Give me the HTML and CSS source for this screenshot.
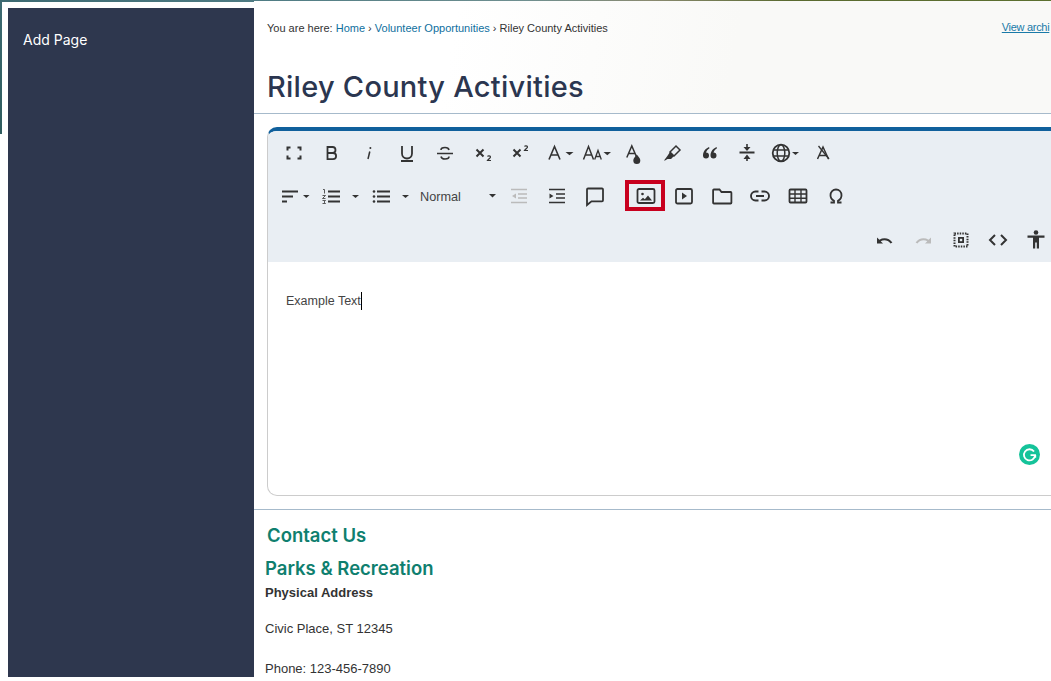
FILE: index.html
```html
<!DOCTYPE html>
<html lang="en">
<head>
<meta charset="utf-8">
<title>Riley County Activities</title>
<link rel="stylesheet" href="styles.css">
</head>
<body>
<div class="strip-top"></div>
<div class="strip-left"></div>
<div class="shell">
  <aside class="sidebar"><a class="side-link">Add Page</a></aside>
  <main class="main">
    <header class="head">
      <div class="crumb-row">
        <p class="crumbs">You are here: <a class="link">Home</a> › <a class="link">Volunteer Opportunities</a> › Riley County Activities</p>
        <a class="archive">View archi</a>
      </div>
      <h1 class="title">Riley County Activities</h1>
    </header>
    <section class="editor">
      <div class="toolbar">
        <div class="row">
          <button class="btn"><svg class="ic" viewBox="0 0 24 24"><path d="M5.500 9.500v-3h3M15.500 6.500h3v3M5.500 14.500v3h3M15.500 17.500h3v-3" stroke-width="2"/></svg></button>
          <button class="btn"><svg class="ic" viewBox="0 0 24 24"><path d="M7.500 6h5a3 3 0 0 1 0 6h-5zM7.500 12h5.500a3.100 3.100 0 0 1 0 6.200h-5.500z"/></svg></button>
          <button class="btn"><svg class="ic" viewBox="0 0 24 24"><path d="M12.800 10.500l-1.800 7.500" stroke-width="1.500"/><circle class="solid" cx="13.400" cy="7" r="1"/></svg></button>
          <button class="btn"><svg class="ic" viewBox="0 0 24 24"><path d="M7 5v7.500a5 5 0 0 0 10 0V5"/><path d="M6 20h12" stroke-width="2"/></svg></button>
          <button class="btn"><svg class="ic" viewBox="0 0 24 24"><path d="M16 9c-.3-1.600-2-2.500-4-2.500S8 7.500 8 9M4 12.500h16M8 15.500c.3 1.500 2 2.500 4 2.500s4-1 4-2.500" stroke-width="1.600"/></svg></button>
          <button class="btn"><svg class="ic" viewBox="0 0 24 24"><path d="M5.500 8.500l7 7M12.500 8.500l-7 7" stroke-width="2"/><path d="M16.500 15.500c.5-1 3-1 3 .5 0 1-2 2-3 3.500h3.500" stroke-width="1.200"/></svg></button>
          <button class="btn"><svg class="ic" viewBox="0 0 24 24"><path d="M4.500 8.500l7 7M11.500 8.500l-7 7" stroke-width="2"/><path d="M15.500 5.500c.5-1 3-1 3 .5 0 1-2 2-3 3.500h3.500" stroke-width="1.200"/></svg></button>
          <button class="btn"><svg class="ic" viewBox="0 0 24 24"><path d="M3 18.500L8.500 5.500l5.500 13M5 14h7" stroke-width="1.600"/><path class="solid" d="M19.500 11h8l-4 3.200z"/></svg></button>
          <button class="btn"><svg class="ic" viewBox="0 0 24 24"><path d="M-.5 18.500L4.500 5.500l5 13M1.500 14h6" stroke-width="1.500"/><path d="M10.700 18.500L14 9.500l3.300 9M11.800 15.500h4.400" stroke-width="1.300"/><path class="solid" d="M19.500 11h7.500l-3.700 3.200z"/></svg></button>
          <button class="btn"><svg class="ic" viewBox="0 0 24 24"><path d="M4.800 16.500L9.800 5l5 11.500M6.800 12.500h6" stroke-width="1.500"/><path class="solid" d="M14.800 13.500c2 2.500 3.500 4 3.500 6a3.500 3.500 0 0 1-7 0c0-2 1.500-3.500 3.500-6z"/></svg></button>
          <button class="btn"><svg class="ic" viewBox="0 0 24 24"><path d="M10 11l6-6 4 4-6 6z" stroke-width="1.500"/><path class="solid" d="M10 11l4 4-3 3H7.500L5 19.500H4l3-4z"/></svg></button>
          <button class="btn"><svg class="ic" viewBox="0 0 24 24"><path class="solid" d="M11 6C7.500 7.500 5 10.500 5 14.500a3 3 0 1 0 3-3c.5-1.500 1.500-3 3.500-4.300zM18.500 6C15 7.500 12.500 10.500 12.500 14.500a3 3 0 1 0 3-3c.5-1.500 1.500-3 3.500-4.300z"/></svg></button>
          <button class="btn"><svg class="ic" viewBox="0 0 24 24"><path d="M4.500 11.500h15" stroke-width="2"/><path d="M12 3v4M12 20v-4" stroke-width="1.600"/><path class="solid" d="M8.500 6h7L12 10zM8.500 18h7L12 13.500z"/></svg></button>
          <button class="btn"><svg class="ic" viewBox="0 0 24 24"><circle cx="8" cy="12" r="8.300"/><ellipse cx="8" cy="12" rx="3.800" ry="8.300" stroke-width="1.500"/><path d="M0 9h16M0 15h16" stroke-width="1.500"/><path class="solid" d="M19 11h7l-3.500 3z"/></svg></button>
          <button class="btn"><svg class="ic" viewBox="0 0 24 24"><path d="M6.500 18L12 6l5.500 12M8.500 14.500h7" stroke-width="1.500"/><path d="M7.500 5l10.500 13" stroke-width="1.300"/></svg></button>
        </div>
        <div class="row">
          <button class="btn"><svg class="ic" viewBox="0 0 24 24"><path d="M0 7.500h16M0 12.500H11M0 17.500H5" stroke-width="2"/><path class="solid" d="M21 11h6.500l-3.200 3z"/></svg></button>
          <button class="btn wide"><svg class="ic" viewBox="0 0 24 24"><path d="M2 7.500h12M2 12.500h12M2 17.500h12" stroke-width="2"/><path d="M-3 5.500h1.500v4M-3.500 11.500h3l-3 3h3M-3.500 16.500h3l-1.500 1.500 1.500 1.500h-3" stroke-width=".8"/><path class="solid" d="M26 11h7l-3.500 3z"/></svg></button>
          <button class="btn wide"><svg class="ic" viewBox="0 0 24 24"><path d="M1 7.500h13M1 12.500h13M1 17.500h13" stroke-width="2"/><circle class="solid" cx="-2" cy="7.500" r="1.300"/><circle class="solid" cx="-2" cy="12.500" r="1.300"/><circle class="solid" cx="-2" cy="17.500" r="1.300"/><path class="solid" d="M26 11h7l-3.500 3z"/></svg></button>
          <div class="select"><span class="select-label">Normal</span><svg class="caret" viewBox="0 0 7 4"><path d="M0 0h7L3.500 3.500z"/></svg></div>
          <button class="btn btn-fixed"><svg class="ic muted" viewBox="0 0 24 24"><path d="M4 5.500h16M11 10h9M11 14h9M4 18.500h16" stroke-width="1.700"/><path class="solid" d="M9 9.500v5l-4-2.500z"/></svg></button>
          <button class="btn btn-fixed"><svg class="ic" viewBox="0 0 24 24"><path d="M4 5.500h16M11 10h9M11 14h9M4 18.500h16" stroke-width="1.700"/><path class="solid" d="M4.500 9.500v5l4-2.500z"/></svg></button>
          <button class="btn btn-fixed"><svg class="ic" viewBox="0 0 24 24"><path d="M5 4.500h14a1 1 0 0 1 1 1v10.800a1 1 0 0 1-1 1H8.500L4 21V5.500a1 1 0 0 1 1-1z"/></svg></button>
          <div class="highlight"><svg class="ic" viewBox="0 0 24 24"><rect x="3.500" y="5" width="17" height="14" rx="1.500"/><circle class="solid" cx="8.500" cy="10" r="1.300"/><path class="solid" d="M6 16.500l3-2.700 1.800 1.400 3.200-3.700 4 5z"/></svg></div>
          <button class="btn btn-fixed"><svg class="ic" viewBox="0 0 24 24"><rect x="4" y="5" width="16" height="14.500" rx="1.500"/><path class="solid" d="M10 8.500v7l5-3.500z"/></svg></button>
          <button class="btn btn-fixed"><svg class="ic" viewBox="0 0 24 24"><path d="M3.900 5.500h5.600l2 2.500h9.100a.8.800 0 0 1 .8.800v9.900a.8.800 0 0 1-.8.800H3.900a.8.800 0 0 1-.8-.8V6.300a.8.800 0 0 1 .8-.8z"/></svg></button>
          <button class="btn btn-fixed"><svg class="ic" viewBox="0 0 24 24"><path d="M10.500 7.500H7.500a4.500 4.500 0 0 0 0 9h3M13.500 7.500h3a4.500 4.500 0 0 1 0 9h-3M8 12h8" stroke-width="1.900"/></svg></button>
          <button class="btn btn-fixed"><svg class="ic" viewBox="0 0 24 24"><rect x="3.500" y="5.500" width="17" height="13" rx="1"/><path d="M3.500 10h17M3.500 14.300h17M9 5.500v13M15 5.500v13" stroke-width="1.400"/></svg></button>
          <button class="btn btn-fixed"><svg class="ic" viewBox="0 0 24 24"><path d="M6.500 18.500h3.500v-1.800c-2-1-3.500-3-3.500-5.500 0-3.300 2.400-5.700 5.500-5.700s5.500 2.400 5.500 5.700c0 2.500-1.500 4.500-3.500 5.500v1.800h3.500"/></svg></button>
        </div>
        <div class="row row-end">
          <button class="btn"><svg class="ic" viewBox="0 0 24 24"><path class="solid" d="M4 9.500v6h6l-2.300-2.200c3-1.900 7.500-1.200 9.800 2.200l1.900-1c-3-4.500-8.500-5.500-13-2.800z"/></svg></button>
          <button class="btn"><svg class="ic muted" viewBox="0 0 24 24"><path class="solid" d="M20 9.500v6h-6l2.300-2.200c-3-1.900-7.500-1.200-9.800 2.200l-1.900-1c3-4.500 8.500-5.500 13-2.800z"/></svg></button>
          <button class="btn"><svg class="ic" viewBox="0 0 24 24"><rect x="5.500" y="5.500" width="13" height="13" stroke-width="2" stroke-dasharray="1.500 1.100"/><rect class="solid" x="9" y="9" width="6" height="6"/><rect class="hole" x="10.800" y="10.800" width="2.400" height="2.400"/></svg></button>
          <button class="btn"><svg class="ic" viewBox="0 0 24 24"><path d="M9 7l-5 5 5 5M15 7l5 5-5 5" stroke-width="2"/></svg></button>
          <button class="btn"><svg class="ic" viewBox="0 0 24 24"><circle class="solid" cx="12" cy="4.500" r="2.300"/><path class="solid" d="M3.500 7.500h17v2.200h-5.500V20.500h-2.200v-6h-1.600v6H9V9.700H3.500z"/></svg></button>
        </div>
      </div>
      <div class="content">
        <p class="sample">Example Text</p>
        <span class="grammar"><svg viewBox="0 0 20 20" class="grammar-icon"><path d="M14.300 7.200A5.300 5.300 0 1 0 15.300 10.500H11M15.500 13v-2.500"/></svg></span>
      </div>
    </section>
    <hr class="rule">
    <section class="contact">
      <h2 class="contact-title">Contact Us</h2>
      <h3 class="dept">Parks &amp; Recreation</h3>
      <p class="label">Physical Address</p>
      <p class="address">Civic Place, ST 12345</p>
      <p class="phone">Phone: 123-456-7890</p>
    </section>
  </main>
</div>
</body>
</html>
```
FILE: styles.css
```css
* { box-sizing: border-box; }
html, body { margin: 0; height: 100%; }
body {
  background: #fff;
  overflow: hidden;
  font-family: "Liberation Sans", Arial, sans-serif;
  color: #333;
  position: relative;
}
.strip-top {
  position: absolute; top: 0; left: 0; right: 0; height: 2px;
  background: linear-gradient(90deg, #3d6a72 0, #4f7c84 25%, #6f8f90 50%, #8a8a70 62%, #5a6a30 75%, #5c7030 100%);
}
.strip-left {
  position: absolute; top: 0; left: 0; width: 2px; height: 134px;
  background: linear-gradient(180deg, #3d6a72, #2f5c5e);
}
.shell {
  position: relative;
  display: flex;
  align-items: flex-start;
  padding: 1px 0 0 8px;
}
.sidebar {
  flex: 0 0 246px;
  height: 669px;
  margin-top: 7px;
  padding: 23px 15px;
  background: #2e374e;
}
.side-link {
  display: block;
  font: 400 14px/18px Inter, sans-serif;
  color: #fff;
}
.main { flex: 1; min-width: 0; overflow: hidden; height: 680px; background: #fff; }
.head {
  height: 113px;
  padding: 20px 0 0 13px;
  background: linear-gradient(100deg, #fff 0, #fff 25%, #f9f9f7 60%);
  border-bottom: 1px solid #a6bacb;
}
.crumb-row { display: flex; justify-content: flex-start; gap: 394px; align-items: flex-start; white-space: nowrap; }
.crumbs { margin: 0; font-size: 11px; line-height: 15px; color: #333; }
.link { color: #0f6f9e; }
.archive { font-size: 11px; line-height: 13px; letter-spacing: -.3px; color: #1a7aa8; text-decoration: underline; }
.title {
  margin: 33px 0 0;
  font: 500 29px/36px Inter, sans-serif;
  letter-spacing: .26px;
  color: #2b3650;
}
.editor {
  width: 800px;
  margin: 13px 0 0 13px;
  border: 1px solid #ccc;
  border-top: 4px solid #10609c;
  border-radius: 10px;
  background: #fff;
  overflow: hidden;
}
.toolbar { background: #e9eef3; height: 131px; padding: 0 0 0 7px; }
.row { display: flex; align-items: center; height: 43.660px; }
.row-end { justify-content: flex-end; padding-right: 11px; }
.btn {
  flex: 0 0 37.800px;
  display: flex; align-items: center; justify-content: center;
  height: 40px; padding: 0; border: 0; background: none;
}
.btn-fixed { flex-basis: 38px; }
.wide { flex-basis: 50px; }
.ic {
  display: block; width: 24px; height: 24px; overflow: visible;
  fill: none; stroke: #333; stroke-width: 1.800;
}
.ic .solid { fill: #333; stroke: none; }
.ic .hole { fill: #e9eef3; stroke: none; }
.muted { stroke: #bbb; }
.muted .solid { fill: #bbb; }
.select {
  flex: 0 0 87px;
  display: flex; align-items: center; justify-content: space-between;
  padding: 0 4px 0 7px;
}
.select-label { font-size: 13.500px; color: #444; transform: scaleX(.94); transform-origin: left; }
.caret { width: 7px; height: 4px; fill: #333; }
.highlight {
  display: flex; align-items: center; justify-content: center;
  width: 40px; height: 31px; margin: 0 0 1.500px 11px;
  padding: 1px 0 0 2px;
  border: 4px solid #c8001e;
}
.highlight .ic { flex: none; }
.content { position: relative; height: 233px; padding: 29px 18px; }
.sample {
  display: inline-block; margin: 0;
  font-size: 12.500px; line-height: 18px; color: #444;
  border-right: 1px solid #000;
}
.grammar {
  position: absolute; left: 751px; top: 182px;
  width: 21px; height: 21px; border-radius: 50%;
  background: #15c39a;
}
.grammar-icon { display: block; width: 21px; height: 21px; fill: none; stroke: #fff; stroke-width: 1.700; }
.rule { height: 1px; margin: 13px 0 0; border: 0; background: #a6bacb; }
.contact { padding: 14px 0 0 11px; }
.contact-title {
  margin: 0 0 0 2px;
  font: 600 18.500px/22px Inter, sans-serif;
  color: #0f7f6f;
}
.dept {
  margin: 11px 0 0;
  font: 600 18.500px/22px Inter, sans-serif;
  color: #0f7f6f;
}
.label { margin: 5px 0 0; font-size: 13px; font-weight: 700; line-height: 18px; color: #333; }
.address { margin: 18px 0 0; font-size: 13px; line-height: 18px; color: #333; }
.phone { margin: 22px 0 0; font-size: 13px; line-height: 18px; color: #333; }
```
